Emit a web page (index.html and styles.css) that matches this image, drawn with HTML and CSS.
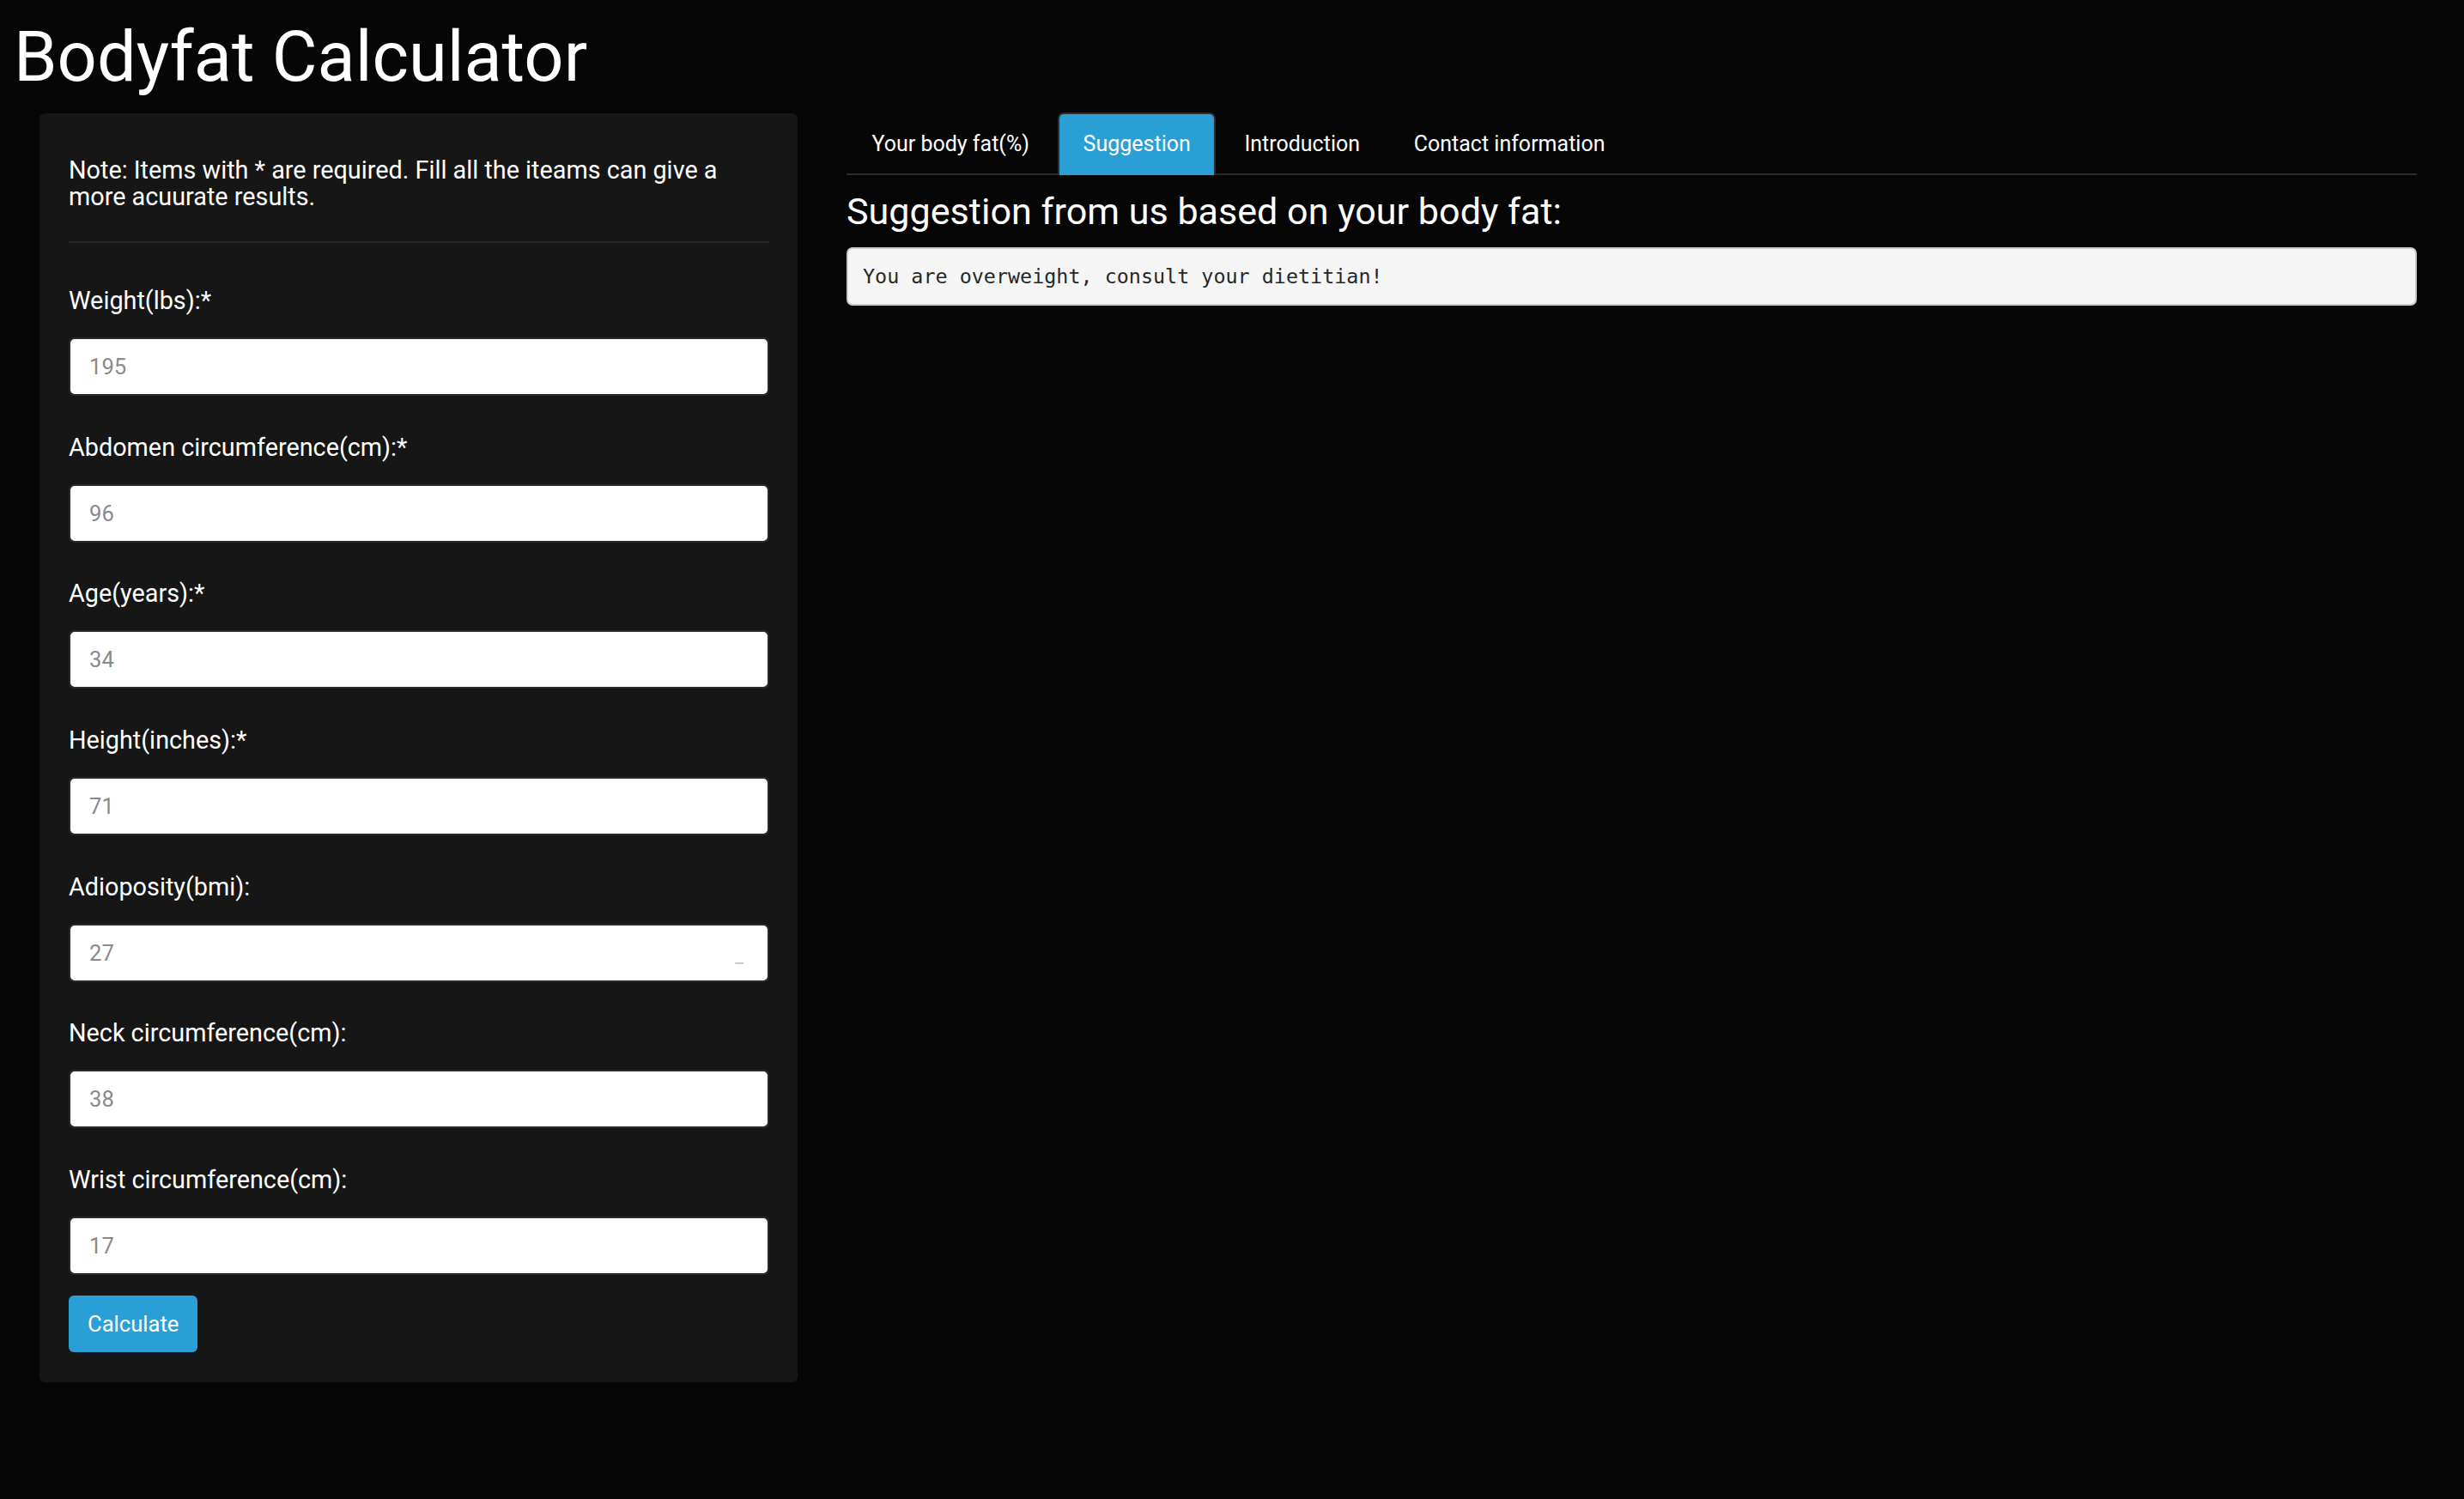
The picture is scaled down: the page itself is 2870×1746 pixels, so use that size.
FILE: index.html
```html
<!DOCTYPE html>
<html lang="en">
<head>
<meta charset="utf-8">
<title>Bodyfat Calculator</title>
<link rel="stylesheet" href="styles.css">
</head>
<body>
<div class="app">
  <h2 class="title">Bodyfat Calculator</h2>
  <div class="layout">
    <aside class="sidebar">
      <div class="note">Note: Items with * are required. Fill all the iteams can give a more acuurate results.</div>
      <hr class="divider">
      <div class="field">
        <label class="field-label" for="w">Weight(lbs):*</label>
        <div class="input-wrap"><input class="input" id="w" type="text" placeholder="195"></div>
      </div>
      <div class="field">
        <label class="field-label" for="a">Abdomen circumference(cm):*</label>
        <div class="input-wrap"><input class="input" id="a" type="text" placeholder="96"></div>
      </div>
      <div class="field">
        <label class="field-label" for="age">Age(years):*</label>
        <div class="input-wrap"><input class="input" id="age" type="text" placeholder="34"></div>
      </div>
      <div class="field">
        <label class="field-label" for="h">Height(inches):*</label>
        <div class="input-wrap"><input class="input" id="h" type="text" placeholder="71"></div>
      </div>
      <div class="field">
        <label class="field-label" for="bmi">Adioposity(bmi):</label>
        <div class="input-wrap"><input class="input" id="bmi" type="text" placeholder="27"><span class="mark"></span></div>
      </div>
      <div class="field">
        <label class="field-label" for="n">Neck circumference(cm):</label>
        <div class="input-wrap"><input class="input" id="n" type="text" placeholder="38"></div>
      </div>
      <div class="field field-last">
        <label class="field-label" for="wr">Wrist circumference(cm):</label>
        <div class="input-wrap"><input class="input" id="wr" type="text" placeholder="17"></div>
      </div>
      <button class="btn" type="button">Calculate</button>
    </aside>
    <main class="main">
      <ul class="tabs">
        <li class="tab"><a class="tab-link" href="#">Your body fat(%)</a></li>
        <li class="tab"><a class="tab-link tab-active" href="#">Suggestion</a></li>
        <li class="tab"><a class="tab-link" href="#">Introduction</a></li>
        <li class="tab"><a class="tab-link" href="#">Contact information</a></li>
      </ul>
      <h4 class="section-title">Suggestion from us based on your body fat:</h4>
      <pre class="output">You are overweight, consult your dietitian!</pre>
    </main>
  </div>
</div>
</body>
</html>
```
FILE: styles.css
```css
html, body {
  margin: 0;
  padding: 0;
  background: #060606;
}
body {
  font-family: Roboto, "Liberation Sans", sans-serif;
  font-size: 25.6px;
  line-height: 36.6px;
  color: #ffffff;
  min-height: 1746px;
}
.app {
  padding: 0 55px 0 0;
}
.title {
  margin: 22px 0 18.5px 0;
  padding-left: 16px;
  font-size: 81.2px;
  line-height: 90.6px;
  font-weight: 400;
  color: #ffffff;
}
.layout {
  display: flex;
  align-items: flex-start;
  gap: 57px;
  padding-left: 46px;
}
.sidebar {
  flex: 0 0 883px;
  box-sizing: border-box;
  margin-top: 1px;
  padding: 34px 33px 35px 34px;
  background: #161616;
  border-radius: 6px;
}
.note {
  margin-top: 17px;
  font-size: 28.8px;
  line-height: 30.7px;
}
.divider {
  margin: 36.6px 0 49.2px 0;
  border: 0;
  border-top: 2px solid #262626;
  height: 0;
}
.field {
  margin-bottom: 41.6px;
}
.field-last {
  margin-bottom: 24.5px;
}
.field-label {
  display: block;
  margin-bottom: 24.4px;
  font-size: 28.8px;
  font-weight: 400;
  line-height: 36.6px;
}
.input-wrap {
  position: relative;
}
.input {
  display: block;
  box-sizing: border-box;
  width: 100%;
  height: 68px;
  margin: 0;
  padding: 0 22px;
  border: 2px solid #2a2a2a;
  border-radius: 7px;
  background: #ffffff;
  font-family: Roboto, "Liberation Sans", sans-serif;
  font-size: 25.6px;
  color: #222;
  outline: none;
}
.input::placeholder {
  color: #8a8a8a;
}
.mark {
  position: absolute;
  left: 776px;
  top: 45px;
  width: 10px;
  height: 2px;
  border-radius: 1px;
  background: #c8c8c8;
}
.btn {
  display: block;
  height: 66px;
  padding: 1px 22px 0 22px;
  border: 0;
  border-radius: 6px;
  background: #2a9fd6;
  color: #ffffff;
  font-family: Roboto, "Liberation Sans", sans-serif;
  font-size: 25.6px;
  line-height: 36.6px;
}
.main {
  flex: 1 1 auto;
  min-width: 0;
}
.tabs {
  display: flex;
  margin: 0;
  padding: 0;
  list-style: none;
  border-bottom: 2px solid #2a2a2a;
}
.tab {
  margin: 0 3.7px -2px 0;
}
.tab-link {
  display: block;
  padding: 17px 27.5px 17px 27.5px;
  border: 2px solid transparent;
  border-bottom: 0;
  border-radius: 7px 7px 0 0;
  color: #ffffff;
  text-decoration: none;
  font-size: 25px;
  line-height: 36.6px;
}
.tab-active {
  background: #2a9fd6;
  border-color: #2e2e2e;
}
.section-title {
  margin: 19.5px 0 16px 0;
  font-size: 43.1px;
  line-height: 48.4px;
  font-weight: 400;
  color: #ffffff;
}
.output {
  margin: 0;
  padding: 15px 17px;
  background: #f5f5f5;
  border: 2px solid #cccccc;
  border-radius: 7px;
  color: #282828;
  font-family: "DejaVu Sans Mono", "Liberation Mono", monospace;
  font-size: 23.4px;
  line-height: 34px;
}
```
